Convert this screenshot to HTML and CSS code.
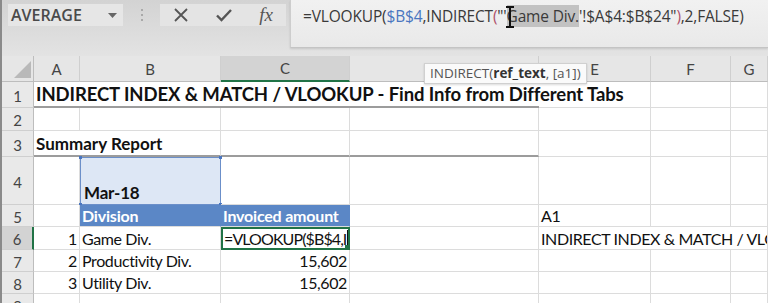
FILE: index.html
```html
<!DOCTYPE html>
<html lang="en">
  <head>
    <meta charset="UTF-8" />
    <title>INDIRECT VLOOKUP</title>
    <link rel="stylesheet" href="styles.css">
  </head>
  <body>
    <!-- Formula bar -->
    <div class="toolbar">
      <div class="namebox">
        <span>AVERAGE</span>
        <svg class="caret" width="9" height="5" viewBox="0 0 9 5"><path d="M0 0h9L4.5 5z" fill="#666"/></svg>
      </div>
      <div class="grip"><i></i><i></i><i></i></div>
      <div class="bar-buttons">
        <svg width="16" height="16" viewBox="0 0 16 16"><path d="M2 2l12 12M14 2L2 14" stroke="#555" stroke-width="1.8"/></svg>
        <svg width="18" height="16" viewBox="0 0 18 16"><path d="M2 8.5l4.5 4.5L16 3" stroke="#555" stroke-width="2.4" fill="none"/></svg>
        <span class="fx">fx</span>
      </div>
      <div class="formula">
        <span>=VLOOKUP(<b class="ref">$B$4</b>,INDIRECT<b class="par">(</b>"'<mark>Game Div.</mark>'!$A$4:$B$24"<b class="par">)</b>,2,FALSE)</span>
        <svg class="ibeam" width="10" height="22" viewBox="0 0 10 22"><path d="M1 1h8M1 21h8M5 1v20" stroke="#111" stroke-width="2"/></svg>
      </div>
    </div>

    <!-- Sheet -->
    <div class="sheet">
      <div class="col-head corner"><svg width="17" height="17" viewBox="0 0 17 17"><path d="M17 0v17H0z" fill="#b9b9b9"/></svg></div>
      <div class="col-head">A</div>
      <div class="col-head">B</div>
      <div class="col-head active">C</div>
      <div class="col-head"></div>
      <div class="col-head">E</div>
      <div class="col-head">F</div>
      <div class="col-head">G</div>

      <div class="row-head">1</div>
      <div class="cell title span4 thick">INDIRECT INDEX &amp; MATCH / VLOOKUP - Find Info from Different Tabs</div>
      <div class="cell"></div>
      <div class="cell"></div>
      <div class="cell"></div>

      <div class="row-head">2</div>
      <div class="cell"></div>
      <div class="cell"></div>
      <div class="cell"></div>
      <div class="cell"></div>
      <div class="cell"></div>
      <div class="cell"></div>
      <div class="cell"></div>

      <div class="row-head">3</div>
      <div class="cell subtitle span2 thick">Summary Report</div>
      <div class="cell thick"></div>
      <div class="cell thick"></div>
      <div class="cell"></div>
      <div class="cell"></div>
      <div class="cell"></div>

      <div class="row-head">4</div>
      <div class="cell"></div>
      <div class="cell range">Mar-18<i class="h tl"></i><i class="h tr"></i><i class="h bl"></i><i class="h br"></i></div>
      <div class="cell"></div>
      <div class="cell"></div>
      <div class="cell"></div>
      <div class="cell"></div>
      <div class="cell"></div>

      <div class="row-head">5</div>
      <div class="cell"></div>
      <div class="cell head-blue">Division</div>
      <div class="cell head-blue">Invoiced amount</div>
      <div class="cell"></div>
      <div class="cell">A1</div>
      <div class="cell"></div>
      <div class="cell"></div>

      <div class="row-head active">6</div>
      <div class="cell num">1</div>
      <div class="cell">Game Div.</div>
      <div class="cell editing">=VLOOKUP($B$4,I<i class="caretline"></i><i class="fill-handle"></i></div>
      <div class="cell"></div>
      <div class="cell span3 clip">INDIRECT INDEX &amp; MATCH / VLOOKUP - Find Info from Different Tabs</div>

      <div class="row-head">7</div>
      <div class="cell num">2</div>
      <div class="cell">Productivity Div.</div>
      <div class="cell num">15,602</div>
      <div class="cell"></div>
      <div class="cell"></div>
      <div class="cell"></div>
      <div class="cell"></div>

      <div class="row-head">8</div>
      <div class="cell num">3</div>
      <div class="cell">Utility Div.</div>
      <div class="cell num">15,602</div>
      <div class="cell"></div>
      <div class="cell"></div>
      <div class="cell"></div>
      <div class="cell"></div>

      <div class="row-head">9</div>
      <div class="cell"></div>
      <div class="cell"></div>
      <div class="cell"></div>
      <div class="cell"></div>
      <div class="cell"></div>
      <div class="cell"></div>
      <div class="cell"></div>
    </div>

    <!-- Function tooltip -->
    <div class="tooltip">INDIRECT(<b>ref_text</b>, [a1])</div>
  </body>
</html>
```

FILE: styles.css
```css
/* Basic Styles */
body {
  margin: 0;
  width: 768px;
  height: 303px;
  overflow: hidden;
  position: relative;
  background-color: #fff;
  font-family: Lato, "Open Sans", sans-serif;
}

/* Formula bar */
.toolbar {
  display: flex;
  height: 56px;
  background: linear-gradient(#d3d3d3, #e3e3e3);
  border-left: 2px solid #8a8a8a;
  box-sizing: border-box;
}

.namebox {
  display: flex;
  align-items: center;
  justify-content: space-between;
  width: 115px;
  height: 22px;
  margin: 4px 0 0 6px;
  padding: 0 6px 0 3px;
  box-sizing: border-box;
  background-color: #e6e6e6;
  font-family: "Open Sans", sans-serif;
  font-weight: 600;
  font-size: 16px;
  color: #4a4a4a;
}

.grip {
  display: flex;
  flex-direction: column;
  align-items: center;
  gap: 3px;
  width: 37px;
  padding-top: 9px;
}

.grip i {
  width: 2px;
  height: 2px;
  background-color: #a9a9a9;
}

.bar-buttons {
  display: flex;
  align-items: center;
  justify-content: space-around;
  width: 126px;
  height: 22px;
  margin-top: 4px;
  background-color: #e4e4e4;
}

.fx {
  font-family: "Liberation Serif", serif;
  font-style: italic;
  font-size: 19px;
  color: #555;
}

.formula {
  position: relative;
  flex: 1;
  height: 48px;
  margin-left: 4px;
  padding: 5px 0 0 12px;
  box-sizing: border-box;
  background: linear-gradient(#f1f1f1, #e9e9e9);
  border-left: 1px solid #cdcdcd;
  border-bottom: 1px solid #c4c4c4;
  box-shadow: 0 1px 2px rgba(0, 0, 0, 0.12);
  font-family: "Open Sans", sans-serif;
  font-size: 15.5px;
  color: #3a3a3a;
  white-space: nowrap;
  letter-spacing: -0.17px;
}

.formula b {
  font-weight: normal;
}

.formula .ref {
  color: #4a76c0;
}

.formula .par {
  color: #b0526c;
}

.formula mark {
  background-color: #c2c2c2;
  color: #3a3a3a;
}

.ibeam {
  position: absolute;
  left: 214px;
  top: 6px;
}

/* Sheet */
.sheet {
  display: grid;
  grid-template-columns: 32px 46px 141px 129px 189px 112px 80px 1fr;
  grid-template-rows: 26px 26px 23px 26px 48px 22px 23px 22px 22px 22px;
  height: 247px;
  border-left: 2px solid #8a8a8a;
  font-size: 16px;
  color: #111;
}

.col-head {
  display: flex;
  align-items: center;
  justify-content: center;
  background-color: #e6e6e6;
  border-right: 1px solid #cfcfcf;
  border-bottom: 1px solid #bdbdbd;
  font-size: 15px;
  color: #444;
}

.col-head.corner {
  justify-content: flex-end;
  align-items: flex-end;
  padding: 0 2px 3px 0;
  border-right: 1px solid #bdbdbd;
}

.col-head.active {
  background-color: #d3d3d3;
  border-bottom: 2px solid #217346;
}

.row-head {
  display: flex;
  align-items: center;
  justify-content: center;
  padding-top: 2px;
  background-color: #e9e9e9;
  border-right: 1px solid #bdbdbd;
  border-bottom: 1px solid #cfcfcf;
  font-size: 15px;
  color: #444;
}

.row-head.active {
  background-color: #d3d3d3;
  border-right: 2px solid #217346;
}

.cell {
  position: relative;
  display: flex;
  align-items: flex-end;
  padding: 0 2px 1px;
  box-sizing: border-box;
  border-right: 1px solid #dcdcdc;
  border-bottom: 1px solid #dcdcdc;
  white-space: nowrap;
  letter-spacing: -0.4px;
  min-width: 0;
}

.span2 {
  grid-column: span 2;
}

.span3 {
  grid-column: span 3;
}

.span4 {
  grid-column: span 4;
}

.title {
  z-index: 1;
  border-right: none;
  font-size: 18.5px;
  font-weight: bold;
  letter-spacing: -0.1px;
}

.subtitle {
  font-size: 17px;
  font-weight: bold;
  letter-spacing: 0;
}

.thick {
  border-bottom: 2px solid #9c9c9c;
}

.num {
  justify-content: flex-end;
}

.clip {
  overflow: hidden;
}

.range {
  background-color: #dde7f5;
  border: 1px solid #6b8fc9;
  font-size: 17px;
  font-weight: bold;
  padding-left: 3px;
  letter-spacing: -0.2px;
}

.range .h {
  position: absolute;
  width: 3px;
  height: 3px;
  background-color: #4a76c0;
}

.range .tl { left: -2px; top: -2px; }
.range .tr { right: -2px; top: -2px; }
.range .bl { left: -2px; bottom: -2px; }
.range .br { right: -2px; bottom: -2px; }

.head-blue {
  background-color: #5b87c6;
  border-right-color: #5b87c6;
  color: #fff;
  font-weight: bold;
  letter-spacing: -0.2px;
}

.editing {
  overflow: hidden;
  border: 2px solid #217346;
  padding-left: 1px;
  padding-bottom: 0;
  letter-spacing: -0.9px;
}

.caretline {
  flex: none;
  width: 1px;
  height: 17px;
  margin-left: 1px;
  margin-bottom: 1px;
  background-color: #111;
}

.fill-handle {
  position: absolute;
  right: -1px;
  bottom: -1px;
  width: 4px;
  height: 4px;
  background-color: #217346;
}

/* Function tooltip */
.tooltip {
  position: absolute;
  left: 424px;
  top: 63px;
  padding: 0 5px;
  height: 19px;
  line-height: 19px;
  background-color: #fafafa;
  border: 1px solid #d0d0d0;
  box-shadow: 0 1px 2px rgba(0, 0, 0, 0.15);
  font-family: "Open Sans", sans-serif;
  font-size: 13.5px;
  color: #555;
  white-space: nowrap;
}

.tooltip b {
  color: #333;
}
```
